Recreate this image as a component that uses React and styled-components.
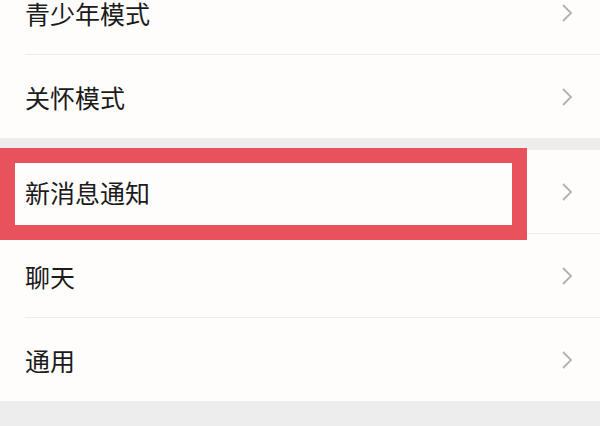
import styled, { createGlobalStyle } from "styled-components";

const GlobalStyle = createGlobalStyle`
    html, body {
        margin: 0;
        padding: 0;
        background: #ededed;
        overflow: hidden;
    }
    body {
        font-family: "Noto Sans CJK SC", "Noto Sans", sans-serif;
    }
`;

const Page = styled.div`
    width: 600px;
    height: 426px;
    background: #ededed;
    overflow: hidden;
`;
const Group = styled.div`
    background: #fefdfc;
    margin-top: ${(p) => p.$top}px;
`;
const Row = styled.div`
    position: relative;
    height: 83px;
    display: flex;
    align-items: center;
    justify-content: space-between;
    padding: 1px 27px 0 25px;
    box-sizing: border-box;
`;
const Label = styled.span`
    font-size: 25px;
    color: #1b1b1b;
    letter-spacing: 0;
`;
const Divider = styled.div`
    height: 1px;
    margin-left: 25px;
    background: #ececec;
`;
const Highlight = styled.div`
    position: absolute;
    left: 0;
    top: -2px;
    width: 527px;
    height: 92px;
    box-sizing: border-box;
    border: 15px solid #e8525c;
    pointer-events: none;
`;

const Chevron = () => (
    <svg width="12" height="20" viewBox="0 0 12 20">
        <polyline points="2,2 10,10 2,18" fill="none" stroke="#b0b0b0" strokeWidth="1.8" />
    </svg>
);

const groups = [
    { top: -29, items: ["青少年模式", "关怀模式"] },
    { top: 12, items: ["新消息通知", "聊天", "通用"] },
];

function App() {
    return (
        <Page>
            <GlobalStyle />
            {groups.map((g, gi) => (
                <Group key={gi} $top={g.top}>
                    {g.items.map((name, i) => (
                        <div key={name}>
                            {i > 0 && <Divider />}
                            <Row>
                                <Label>{name}</Label>
                                <Chevron />
                                {name === "新消息通知" && <Highlight />}
                            </Row>
                        </div>
                    ))}
                </Group>
            ))}
        </Page>
    );
}
export default App;
